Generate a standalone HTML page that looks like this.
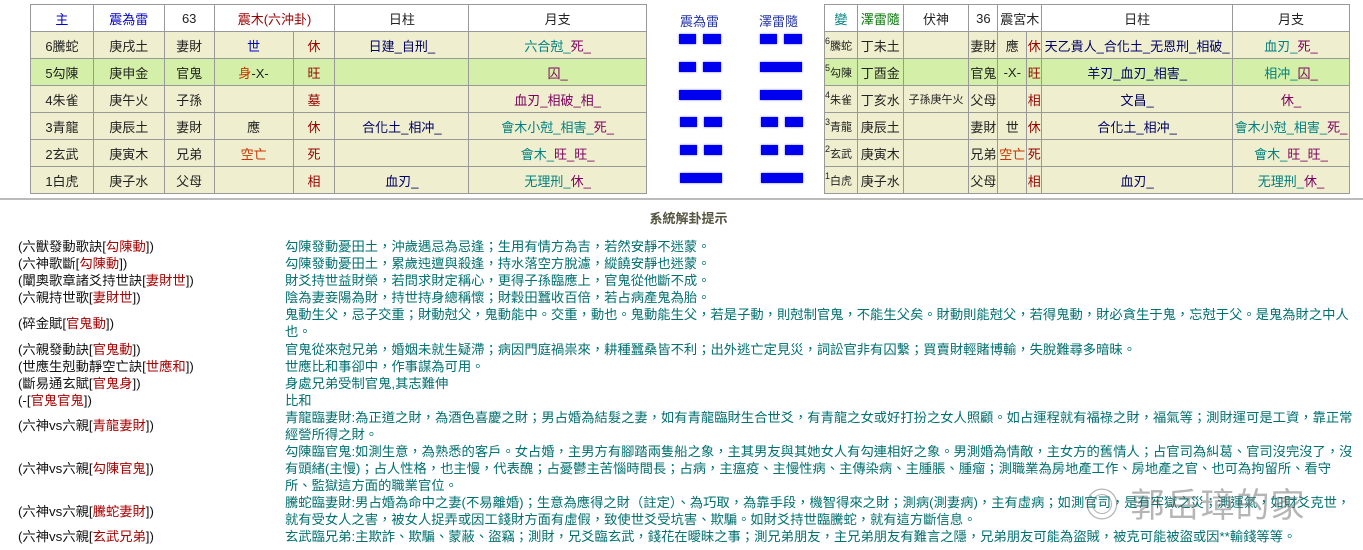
<!DOCTYPE html>
<html><head><meta charset="utf-8"><style>
body{margin:0;width:1363px;height:550px;background:#fff;font-family:"Liberation Sans","Noto Sans CJK TC",sans-serif;position:relative;overflow:hidden}
table{position:absolute;border-collapse:collapse;font-size:13px;}
td{border:1px solid #999;text-align:center;padding:0;height:26px;color:#222;white-space:nowrap;overflow:hidden}
tr.h td{background:#fff}
tr.b td{background:#efefcf}
tr.g td{background:#d4f0a8}
.bl{color:#0000cc}.rd{color:#990000}.dr{color:#8b1a1a}.tl{color:#008080}.pu{color:#800060}.gr{color:#007700}.nv{color:#000066}
.hx{position:absolute;font-size:13px;color:#2233aa}
.bar{position:absolute;height:10px;background:#0000ee;box-shadow:0 0 2px #6f6fff}
.rule{position:absolute;left:0;top:198px;width:1363px;height:2px;background:#bbb}
.title{position:absolute;top:208px;left:0;width:1377px;text-align:center;font-size:13px;font-weight:bold;color:#555540}
.l{position:absolute;left:18px;font-size:13.3px;color:#111;line-height:17px;white-space:nowrap}
.l span{color:#aa0000}
.r{position:absolute;left:285px;font-size:13.3px;color:#007070;line-height:17px;white-space:nowrap}
.sup{font-size:9px;vertical-align:super}
.sm{font-size:11px}
</style></head><body>
<table style="left:30px;top:4px;width:617px">
<colgroup><col style="width:63px"><col style="width:71px"><col style="width:50px"><col style="width:79px"><col style="width:42px"><col style="width:134px"><col style="width:178px"></colgroup>
<tr class="h"><td class="bl">主</td><td class="bl">震為雷</td><td>63</td><td colspan="2" class="rd">震木(六沖卦)</td><td>日柱</td><td>月支</td></tr>
<tr class="b"><td>6騰蛇</td><td>庚戌土</td><td>妻財</td><td class="bl">世</td><td class="rd">休</td><td class="nv">日建_自刑_</td><td class="tl">六合尅_<span class="pu">死_</span></td></tr>
<tr class="g"><td>5勾陳</td><td>庚申金</td><td>官鬼</td><td><span style="color:#cc3300">身</span>-X-</td><td class="rd">旺</td><td></td><td class="pu">囚_</td></tr>
<tr class="b"><td>4朱雀</td><td>庚午火</td><td>子孫</td><td></td><td class="rd">墓</td><td></td><td class="pu">血刃_相破_相_</td></tr>
<tr class="b"><td>3青龍</td><td>庚辰土</td><td>妻財</td><td>應</td><td class="rd">休</td><td class="nv">合化土_相冲_</td><td class="tl">會木小尅_相害_<span class="pu">死_</span></td></tr>
<tr class="b"><td>2玄武</td><td>庚寅木</td><td>兄弟</td><td style="color:#cc3300">空亡</td><td class="rd">死</td><td></td><td class="tl">會木_<span class="pu">旺_旺_</span></td></tr>
<tr class="b"><td>1白虎</td><td>庚子水</td><td>父母</td><td></td><td class="rd">相</td><td class="nv">血刃_</td><td class="tl">无理刑_<span class="pu">休_</span></td></tr>
</table>

<div class="hx" style="left:680px;top:11px">震為雷</div>
<div class="hx" style="left:759px;top:11px">澤雷隨</div>
<div class="bar" style="left:679px;top:34px;width:17px"></div><div class="bar" style="left:703px;top:34px;width:18px"></div>
<div class="bar" style="left:679px;top:62px;width:17px"></div><div class="bar" style="left:703px;top:62px;width:18px"></div>
<div class="bar" style="left:679px;top:90px;width:42px"></div>
<div class="bar" style="left:680px;top:117px;width:17px"></div><div class="bar" style="left:704px;top:117px;width:18px"></div>
<div class="bar" style="left:680px;top:145px;width:17px"></div><div class="bar" style="left:704px;top:145px;width:18px"></div>
<div class="bar" style="left:680px;top:173px;width:42px"></div>
<div class="bar" style="left:760px;top:34px;width:17px"></div><div class="bar" style="left:784px;top:34px;width:18px"></div>
<div class="bar" style="left:760px;top:62px;width:42px"></div>
<div class="bar" style="left:760px;top:90px;width:42px"></div>
<div class="bar" style="left:761px;top:117px;width:17px"></div><div class="bar" style="left:785px;top:117px;width:18px"></div>
<div class="bar" style="left:761px;top:145px;width:17px"></div><div class="bar" style="left:785px;top:145px;width:18px"></div>
<div class="bar" style="left:761px;top:173px;width:42px"></div>

<table style="left:824px;top:4px;width:526px">
<colgroup><col style="width:33px"><col style="width:46px"><col style="width:66px"><col style="width:29px"><col style="width:29px"><col style="width:15px"><col style="width:191px"><col style="width:117px"></colgroup>
<tr class="h"><td class="tl">變</td><td class="gr">澤雷隨</td><td>伏神</td><td>36</td><td colspan="2">震宮木</td><td>日柱</td><td>月支</td></tr>
<tr class="b"><td style="text-align:left"><span class="sup">6</span><span class="sm">騰蛇</span></td><td>丁未土</td><td></td><td>妻財</td><td>應</td><td class="rd">休</td><td class="nv">天乙貴人_合化土_无恩刑_相破_</td><td class="tl">血刃_<span class="pu">死_</span></td></tr>
<tr class="g"><td style="text-align:left"><span class="sup">5</span><span class="sm">勾陳</span></td><td>丁酉金</td><td></td><td>官鬼</td><td>-X-</td><td class="rd">旺</td><td class="nv">羊刃_血刃_相害_</td><td class="tl">相冲_<span class="pu">囚_</span></td></tr>
<tr class="b"><td style="text-align:left"><span class="sup">4</span><span class="sm">朱雀</span></td><td>丁亥水</td><td class="sm">子孫庚午火</td><td>父母</td><td></td><td class="rd">相</td><td class="nv">文昌_</td><td class="pu">休_</td></tr>
<tr class="b"><td style="text-align:left"><span class="sup">3</span><span class="sm">青龍</span></td><td>庚辰土</td><td></td><td>妻財</td><td>世</td><td class="rd">休</td><td class="nv">合化土_相冲_</td><td class="tl">會木小尅_相害_<span class="pu">死_</span></td></tr>
<tr class="b"><td style="text-align:left"><span class="sup">2</span><span class="sm">玄武</span></td><td>庚寅木</td><td></td><td>兄弟</td><td style="color:#cc3300">空亡</td><td class="rd">死</td><td></td><td class="tl">會木_<span class="pu">旺_旺_</span></td></tr>
<tr class="b"><td style="text-align:left"><span class="sup">1</span><span class="sm">白虎</span></td><td>庚子水</td><td></td><td>父母</td><td></td><td class="rd">相</td><td class="nv">血刃_</td><td class="tl">无理刑_<span class="pu">休_</span></td></tr>
</table>

<div class="rule"></div>
<div class="title">系統解卦提示</div>

<div class="l" style="top:238px">(六獸發動歌訣[<span>勾陳動</span>])</div>
<div class="r" style="top:238px">勾陳發動憂田土，沖歲遇忌為忌逢；生用有情方為吉，若然安靜不迷蒙。</div>
<div class="l" style="top:255px">(六神歌斷[<span>勾陳動</span>])</div>
<div class="r" style="top:255px">勾陳發動憂田土，累歲迍邅與殺逢，持水落空方脫濾，縱饒安靜也迷蒙。</div>
<div class="l" style="top:272px">(闡奧歌章諸爻持世訣[<span>妻財世</span>])</div>
<div class="r" style="top:272px">財爻持世益財榮，若問求財定稱心，更得子孫臨應上，官鬼從他斷不成。</div>
<div class="l" style="top:289px">(六親持世歌[<span>妻財世</span>])</div>
<div class="r" style="top:289px">陰為妻妾陽為財，持世持身總稱懷；財穀田蠶收百倍，若占病產鬼為胎。</div>
<div class="l" style="top:315px">(碎金賦[<span>官鬼動</span>])</div>
<div class="r" style="top:306px">鬼動生父，忌子交重；財動尅父，鬼動能中。交重，動也。鬼動能生父，若是子動，則尅制官鬼，不能生父矣。財動則能尅父，若得鬼動，財必貪生于鬼，忘尅于父。是鬼為財之中人<br>也。</div>
<div class="l" style="top:341px">(六親發動訣[<span>官鬼動</span>])</div>
<div class="r" style="top:341px">官鬼從來尅兄弟，婚姻未就生疑滯；病因門庭禍祟來，耕種蠶桑皆不利；出外逃亡定見災，詞訟官非有囚繫；買賣財輕賭博輸，失脫難尋多暗昧。</div>
<div class="l" style="top:358px">(世應生剋動靜空亡訣[<span>世應和</span>])</div>
<div class="r" style="top:358px">世應比和事卻中，作事謀為可用。</div>
<div class="l" style="top:375px">(斷易通玄賦[<span>官鬼身</span>])</div>
<div class="r" style="top:375px">身處兄弟受制官鬼,其志難伸</div>
<div class="l" style="top:392px">(-[<span>官鬼官鬼</span>])</div>
<div class="r" style="top:392px">比和</div>
<div class="l" style="top:417px">(六神vs六親[<span>青龍妻財</span>])</div>
<div class="r" style="top:409px">青龍臨妻財:為正道之財，為酒色喜慶之財；男占婚為結髮之妻，如有青龍臨財生合世爻，有青龍之女或好打扮之女人照顧。如占運程就有福祿之財，福氣等；測財運可是工資，靠正常<br>經營所得之財。</div>
<div class="l" style="top:460px">(六神vs六親[<span>勾陳官鬼</span>])</div>
<div class="r" style="top:443px">勾陳臨官鬼:如測生意，為熟悉的客戶。女占婚，主男方有腳踏兩隻船之象，主其男友與其她女人有勾連相好之象。男測婚為情敵，主女方的舊情人；占官司為糾葛、官司沒完沒了，沒<br>有頭緒(主慢)；占人性格，也主慢，代表醜；占憂鬱主苦惱時間長；占病，主瘟疫、主慢性病、主傳染病、主腫脹、腫瘤；測職業為房地產工作、房地產之官、也可為拘留所、看守<br>所、監獄這方面的職業官位。</div>
<div class="l" style="top:503px">(六神vs六親[<span>騰蛇妻財</span>])</div>
<div class="r" style="top:494px">騰蛇臨妻財:男占婚為命中之妻(不易離婚)；生意為應得之財（註定）、為巧取，為靠手段，機智得來之財；測病(測妻病)，主有虛病；如測官司，是有牢獄之災；測運氣，如財爻克世，<br>就有受女人之害，被女人捉弄或因工錢財方面有虛假，致使世爻受坑害、欺騙。如財爻持世臨騰蛇，就有這方斷信息。</div>
<div class="l" style="top:528px">(六神vs六親[<span>玄武兄弟</span>])</div>
<div class="r" style="top:528px">玄武臨兄弟:主欺詐、欺騙、蒙蔽、盜竊；測財，兄爻臨玄武，錢花在曖昧之事；測兄弟朋友，主兄弟朋友有難言之隱，兄弟朋友可能為盜賊，被克可能被盜或因**輸錢等等。</div>

<div style="position:absolute;left:1085px;top:478px;font-size:34px;color:rgba(90,90,90,0.45);letter-spacing:1px">◎ 郭岳璋的家</div>
</body></html>
